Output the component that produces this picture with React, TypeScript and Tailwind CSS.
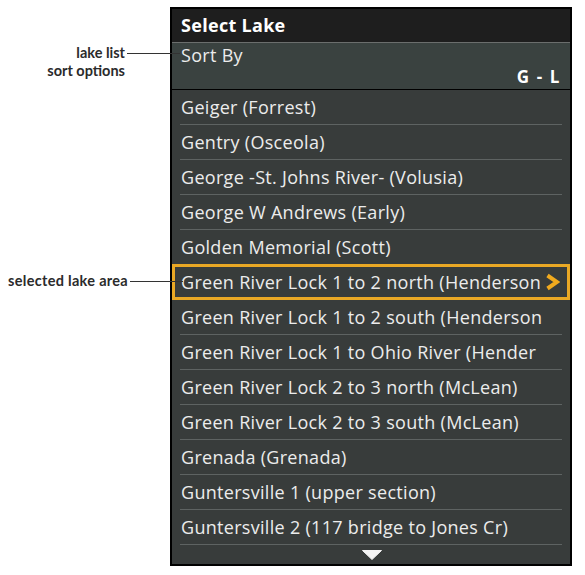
import React from "react";

const lakes = [
  "Geiger (Forrest)",
  "Gentry (Osceola)",
  "George -St. Johns River- (Volusia)",
  "George W Andrews (Early)",
  "Golden Memorial (Scott)",
  "Green River Lock 1 to 2 north (Henderson",
  "Green River Lock 1 to 2 south (Henderson",
  "Green River Lock 1 to Ohio River (Hender",
  "Green River Lock 2 to 3 north (McLean)",
  "Green River Lock 2 to 3 south (McLean)",
  "Grenada (Grenada)",
  "Guntersville 1 (upper section)",
  "Guntersville 2 (117 bridge to Jones Cr)",
];

const SELECTED = 5;

const Callout = ({ lines }: { lines: string[] }) => (
  <div className="absolute right-[calc(100%-8px)] top-0 flex items-start">
    <div className="text-right font-['Lato',sans-serif] font-bold text-[14.5px] leading-[18px] text-[#2b2b2b] whitespace-nowrap">
      {lines.map((l) => (
        <div key={l}>{l}</div>
      ))}
    </div>
    <div className="w-[53px] h-px bg-[#333333] mt-[9px] ml-[2px]" />
  </div>
);

const Chevron = () => (
  <svg width="15" height="18" viewBox="0 0 15 18" className="shrink-0 ml-[5px]">
    <polyline
      points="2.5,2.5 12,9 2.5,15.5"
      fill="none"
      stroke="#f0aa1e"
      strokeWidth="4"
      strokeLinejoin="miter"
    />
  </svg>
);

export default function App() {
  return (
    <div className="w-[585px] h-[575px] bg-white pl-[170px] pt-[7px] font-['Open_Sans',sans-serif]">
      <div className="w-[402px] border-2 border-black bg-[#383c3b] flex flex-col">
        {/* ---------------------- header ---------------------- */}
        <div className="h-[33px] bg-[#1e1e1e] flex items-center px-[9px] text-white font-bold text-[18px] tracking-[0.3px]">
          Select Lake
        </div>
        <div className="h-px bg-[#6b6e6d]" />

        {/* ---------------------- sort by ---------------------- */}
        <div className="relative h-[46px] bg-[#3a4240] flex flex-col px-[9px] text-[#ececec]">
          <div className="text-[18px] leading-[22px] tracking-[0.3px] mt-[1px]">Sort By</div>
          <div className="self-end font-bold text-[17px] leading-[21px] tracking-[1.6px] text-white">
            G - L
          </div>
          <div className="absolute top-[1px] right-full">
            <div className="relative">
              <Callout lines={["lake list", "sort options"]} />
            </div>
          </div>
        </div>
        <div className="h-px bg-black" />

        {/* ---------------------- lake list ---------------------- */}
        <div className="flex flex-col">
          {lakes.map((lake, i) => {
            if (i === SELECTED) {
              return (
                <div
                  key={lake}
                  className="relative h-[36px] border-[3px] border-[#e9a825] flex items-center pl-[6px] pr-[7px] text-[#ececec] text-[18px] tracking-[0.3px] whitespace-nowrap"
                >
                  <span className="overflow-hidden">{lake}</span>
                  <Chevron />
                  <div className="absolute top-[5px] right-full">
                    <div className="relative">
                      <Callout lines={["selected lake area"]} />
                    </div>
                  </div>
                </div>
              );
            }
            return (
              <div key={lake} className="flex flex-col">
                <div className="h-[34px] flex items-center px-[9px] text-[#ececec] text-[18px] tracking-[0.3px] whitespace-nowrap overflow-hidden">
                  {lake}
                </div>
                {i !== SELECTED - 1 && <div className="h-px mx-[8px] bg-[#5e6362]" />}
              </div>
            );
          })}
        </div>

        {/* ---------------------- scroll arrow ---------------------- */}
        <div className="h-[19px] flex items-center justify-center pl-[1px]">
          <svg width="20" height="10" viewBox="0 0 20 10">
            <polygon points="0.5,0.5 19.5,0.5 10,9.5" fill="#f4f4f4" strokeLinejoin="round" stroke="#f4f4f4" strokeWidth="1" />
          </svg>
        </div>
      </div>
    </div>
  );
}
